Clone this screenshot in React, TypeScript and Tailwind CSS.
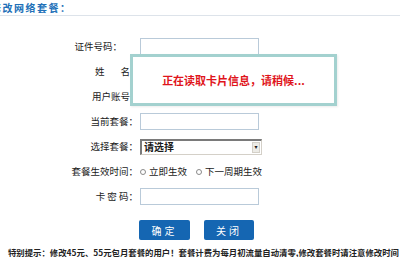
const FONT = { fontFamily: '"Noto Sans CJK SC", "DejaVu Sans", sans-serif' }

function Row({
  label,
  labelClass = '',
  children,
}: {
  label: React.ReactNode
  labelClass?: string
  children?: React.ReactNode
}) {
  return (
    <div className="flex h-[25px] items-center">
      <div className={`w-[140px] shrink-0 text-right pr-[2px] ${labelClass}`}>{label}</div>
      <div className="flex items-center">{children}</div>
    </div>
  )
}

function TextBox() {
  return <div className="h-[17px] w-[119px] border border-[#b9cad9] bg-white" />
}

function Radio({ label }: { label: string }) {
  return (
    <span className="flex items-center gap-[3px]">
      <span className="inline-block h-[6px] w-[6px] rounded-full border border-[#8a8a8a] bg-white" />
      <span>{label}</span>
    </span>
  )
}

export default function App() {
  return (
    <div
      className="relative h-[257px] w-[400px] overflow-hidden bg-white text-[9.5px] text-[#1a1a1a]"
      style={FONT}
    >
      {/* header */}
      <div className="h-[16px] border-b border-[#dde3ea]">
        <div className="ml-[-9px] pt-[1px] text-[10px] font-bold leading-[13px] tracking-[1.5px] text-[#2170b8]">
          修改网络套餐：
        </div>
      </div>

      {/* form */}
      <div className="mt-[18px]">
        <Row label="证件号码：" labelClass="pr-[18px]">
          <TextBox />
        </Row>
        <Row
          label={
            <span>
              姓<span className="ml-[16px]">名</span>
            </span>
          }
          labelClass="pr-[10px]"
        />
        <Row label="用户账号" labelClass="pr-[10px]" />
        <Row label="当前套餐：">
          <TextBox />
        </Row>
        <Row label="选择套餐：">
          <div className="flex h-[16px] w-[122px] items-center border-t-2 border-l-2 border-b border-r border-t-[#7a7a7a] border-l-[#7a7a7a] border-b-[#d4d0c8] border-r-[#d4d0c8] bg-white">
            <span className="flex-1 pl-[2px] text-[10px] font-bold leading-none">请选择</span>
            <span className="mr-[1px] flex h-[11px] w-[8px] items-center justify-center border border-[#d4d0c8] bg-[#ecebe6] text-[6px] leading-none">
              ▾
            </span>
          </div>
        </Row>
        <Row label="套餐生效时间：">
          <div className="flex items-center gap-[9px]">
            <Radio label="立即生效" />
            <Radio label="下一周期生效" />
          </div>
        </Row>
        <Row label={<span>卡 密 码：</span>}>
          <TextBox />
        </Row>
        <div className="mt-[11px] flex h-[20px] pl-[139px]">
          <button className="h-[20px] w-[51px] rounded-[2px] bg-[#1566b2] text-[10px] tracking-[3px] text-white">
            确定
          </button>
          <button className="ml-[14px] h-[20px] w-[50px] rounded-[2px] bg-[#1566b2] text-[10px] tracking-[3px] text-white">
            关闭
          </button>
        </div>
      </div>

      {/* footer note */}
      <div className="mt-[6px] whitespace-nowrap pl-[8px] text-[8.4px] font-bold leading-[12px] text-[#222]">
        特别提示：修改45元、55元包月套餐的用户！套餐计费为每月初流量自动清零,修改套餐时请注意修改时间
      </div>

      {/* reading card overlay */}
      <div className="absolute left-[130px] top-[54px] flex h-[52px] w-[207px] items-center justify-center border-[3px] border-[#a3d1cf] bg-white shadow-[1px_1px_2px_rgba(0,0,0,0.08)]">
        <span className="text-[11px] font-bold text-[#e0141b]">正在读取卡片信息，请稍候...</span>
      </div>
    </div>
  )
}
